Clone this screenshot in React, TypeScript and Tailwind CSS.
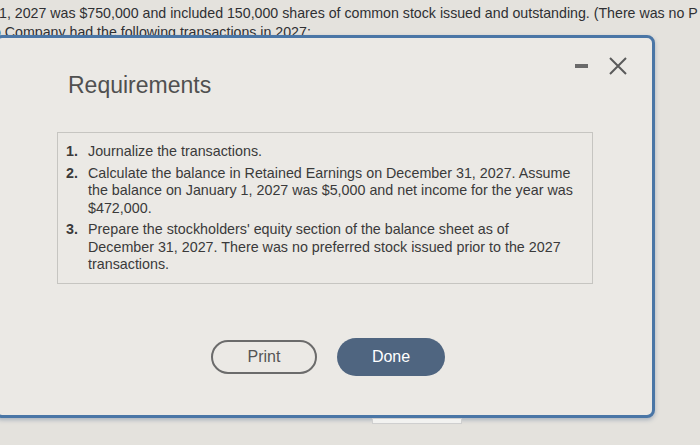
import React from 'react';

export default function App() {
  return (
    <div className="relative w-[700px] h-[445px] overflow-hidden bg-[#e4e2dd] text-[#333] font-['Liberation_Sans',Arial,sans-serif]">
      {/* page text behind the dialog */}
      <div className="pt-[4px] text-[14.2px] leading-[19px] whitespace-nowrap text-[#2f3033]">
        <p className="-ml-[1px]">1, 2027 was $750,000 and included 150,000 shares of common stock issued and outstanding. (There was no P</p>
        <p className="-ml-[7px] underline">o Company had the following transactions in 2027:</p>
      </div>

      {/* dialog */}
      <div className="absolute left-[-6px] top-[35px] w-[661px] h-[383px] rounded-[8px] border-[3px] border-[#4a76a6] bg-[#ebe9e5] shadow-[0_2px_4px_rgba(60,90,130,0.35)]">
        <div className="flex items-start justify-between pl-[71px] pr-[24px] pt-[32px]">
          <h2 className="text-[23px] leading-[30px] text-[#505050]">Requirements</h2>
          <div className="flex items-center gap-[20px] -mt-[14px]">
            <span className="block w-[13px] h-[4px] bg-[#6a6a6a]" />
            <svg width="20" height="20" viewBox="0 0 20 20" className="text-[#5a5a5a]">
              <path d="M2 2 L18 18 M18 2 L2 18" stroke="currentColor" strokeWidth="2" />
            </svg>
          </div>
        </div>

        <div className="mt-[32px] ml-[60px] w-[536px] border border-[#c6c5c1] pl-[8px] pr-[12px] pt-[10px] pb-[9px] text-[14.3px] leading-[17.5px] text-[#3a3a3a]">
          <ol className="flex flex-col gap-[4px]">
            <li className="flex">
              <span className="w-[22px] shrink-0 font-bold">1.</span>
              <span>Journalize the transactions.</span>
            </li>
            <li className="flex">
              <span className="w-[22px] shrink-0 font-bold">2.</span>
              <span>Calculate the balance in Retained Earnings on December 31, 2027. Assume the balance on January 1, 2027 was $5,000 and net income for the year was $472,000.</span>
            </li>
            <li className="flex">
              <span className="w-[22px] shrink-0 font-bold">3.</span>
              <span>Prepare the stockholders' equity section of the balance sheet as of December&nbsp;31,&nbsp;2027. There was no preferred stock issued prior to the 2027 transactions.</span>
            </li>
          </ol>
        </div>

        <div className="mt-[54px] flex items-center gap-[20px] pl-[214px]">
          <button className="w-[106px] h-[34px] rounded-full border-2 border-[#6b6b6b] text-[16px] text-[#555]">Print</button>
          <button className="w-[108px] h-[38px] rounded-full bg-[#4f6580] text-[16px] text-white">Done</button>
        </div>
      </div>

      <div className="absolute left-[372px] top-[418px] w-[90px] h-[6px] border border-[#cfcfcf] bg-[#f2f2f0]" />
    </div>
  );
}
